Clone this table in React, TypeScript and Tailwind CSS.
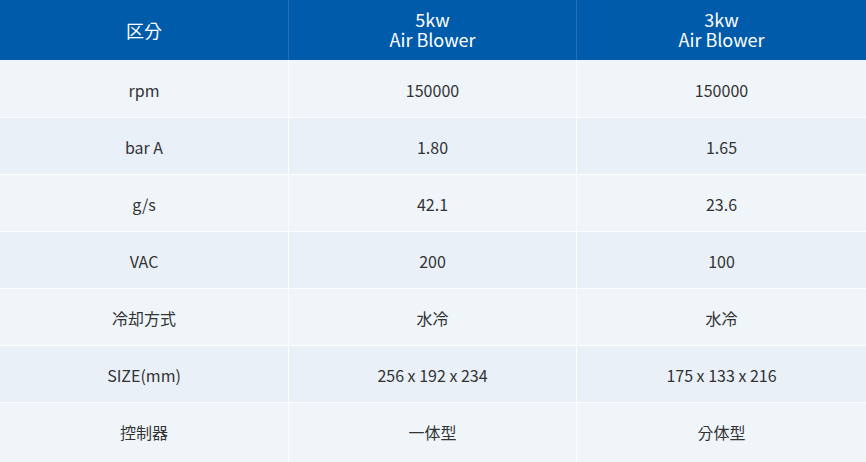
const rows = [
  ["rpm", "150000", "150000"],
  ["bar A", "1.80", "1.65"],
  ["g/s", "42.1", "23.6"],
  ["VAC", "200", "100"],
  ["冷却方式", "水冷", "水冷"],
  ["SIZE(mm)", "256 x 192 x 234", "175 x 133 x 216"],
  ["控制器", "一体型", "分体型"],
];

const font = { fontFamily: '"Noto Sans CJK KR", "Noto Sans", sans-serif' };

export default function App() {
  return (
    <div className="w-[866px] h-[462px] bg-white overflow-hidden" style={font}>
      <div className="grid grid-cols-[288px_287px_1fr] gap-px h-[60px] bg-[#2470b6]">
        <div className="bg-[#005bab] flex items-center justify-center text-white text-[18px] pt-[1px]">区分</div>
        <div className="bg-[#005bab] flex flex-col items-center justify-center text-white text-[18px] leading-[20px] pb-[2px]">
          <span>5kw</span>
          <span>Air Blower</span>
        </div>
        <div className="bg-[#005bab] flex flex-col items-center justify-center text-white text-[18px] leading-[20px] pb-[2px]">
          <span>3kw</span>
          <span>Air Blower</span>
        </div>
      </div>
      <div className="flex flex-col gap-px">
        {rows.map((r, i) => (
          <div
            key={i}
            className={
              "grid grid-cols-[288px_287px_1fr] gap-px " +
              (i === 0 ? "h-[57px]" : i === rows.length - 1 ? "h-[60px]" : "h-[56px]")
            }
          >
            {r.map((c, j) => (
              <div
                key={j}
                className={
                  "flex items-center justify-center text-[16px] text-[#333333] " +
                  (i === rows.length - 1 ? "pb-[3px] " : "pt-[2px] ") +
                  (i % 2 === 0 ? "bg-[#f0f5fa]" : "bg-[#e9f0f8]")
                }
              >
                {c}
              </div>
            ))}
          </div>
        ))}
      </div>
    </div>
  );
}
